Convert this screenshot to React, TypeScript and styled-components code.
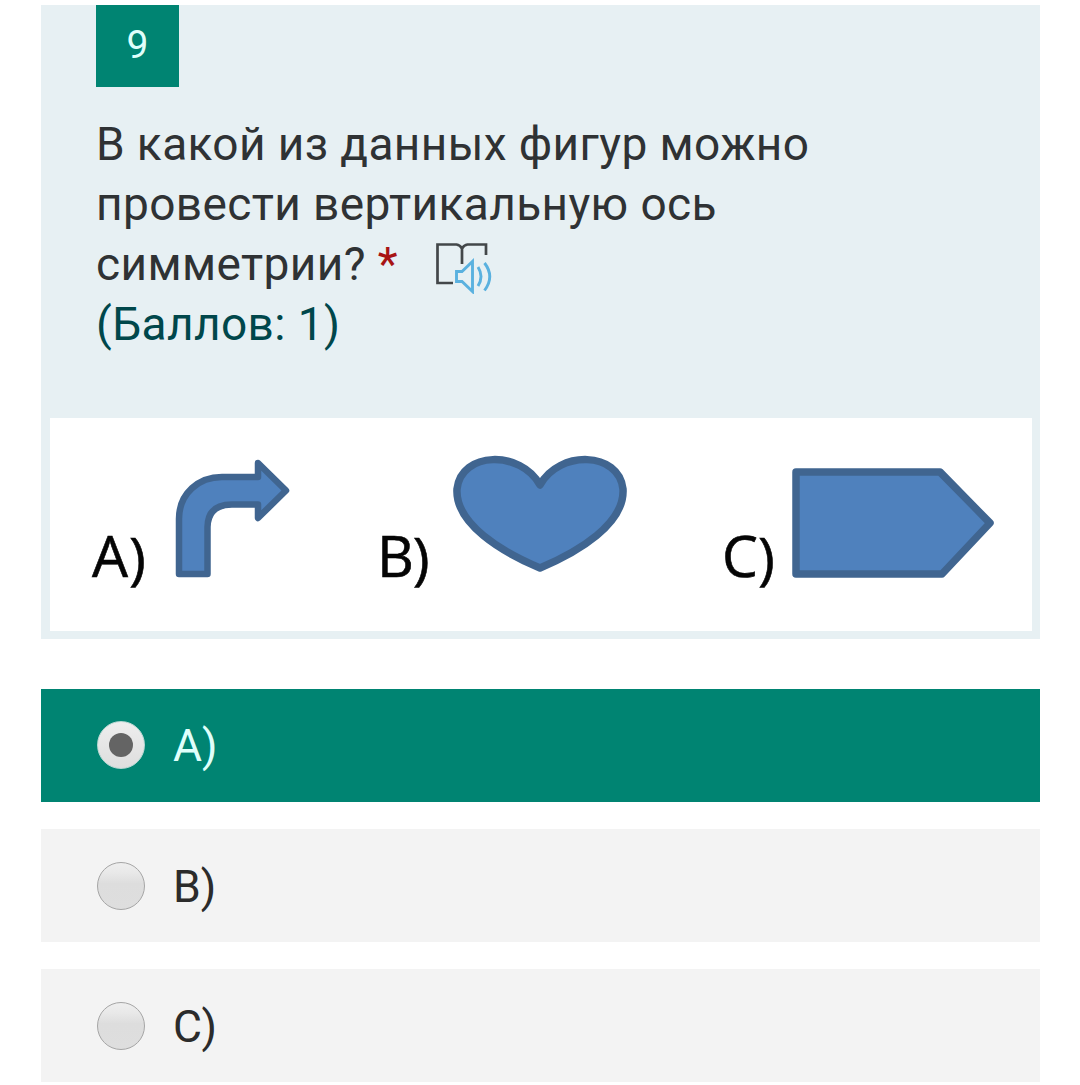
import React, { useState } from "react";
import styled, { createGlobalStyle } from "styled-components";

const GlobalStyle = createGlobalStyle`
  *, *::before, *::after { box-sizing: border-box; }
  body {
    margin: 0;
    background: #fff;
    font-family: Roboto, "Liberation Sans", sans-serif;
    overflow: hidden;
  }
`;

const Page = styled.main`
  display: flex;
  flex-direction: column;
  height: 1085px;
  padding: 5px 40px 0 41px;
`;

const QuestionCard = styled.section`
  display: flex;
  flex-direction: column;
  flex: none;
  height: 634px;
  margin-bottom: 50px;
  padding: 0 8px 8px 9px;
  background: #e7f0f3;
`;

const QuestionNumber = styled.div`
  display: flex;
  justify-content: center;
  width: 83px;
  height: 82px;
  margin-left: 46px;
  padding-top: 16px;
  background: #008472;
  color: #dffffb;
  font-size: 39px;
  line-height: 48px;
`;

const Question = styled.h1`
  flex: 1;
  margin: 27px 0 0 46px;
  color: #2f3234;
  font-size: 46px;
  font-weight: 400;
  line-height: 60px;
  letter-spacing: 0.4px;
`;

const Line = styled.span`
  display: flex;
  white-space: pre;
`;

const Required = styled.span`
  margin-left: 12px;
  color: #a81414;
`;

const Points = styled.span`
  display: block;
  color: #00474b;
`;

const ReaderIcon = styled.svg`
  width: 60px;
  height: 60px;
  margin-left: 35px;
`;

const Figure = styled.svg`
  display: block;
  width: 982px;
  height: 213px;
  background: #fff;
`;

const FigureLabel = styled.text`
  fill: #050505;
  stroke: #050505;
  stroke-width: 0.6px;
  font-family: "Open Sans", "Noto Sans", sans-serif;
  font-size: 57px;
`;

const Options = styled.div`
  display: flex;
  flex-direction: column;
  gap: 27px;
`;

const Option = styled.label<{ $checked: boolean }>`
  display: flex;
  align-items: center;
  flex: none;
  gap: 28px;
  height: 113px;
  padding: 0 0 ${(p) => (p.$checked ? 1 : 0)}px 56px;
  background: ${(p) => (p.$checked ? "#008472" : "#f3f3f3")};
  color: ${(p) => (p.$checked ? "#dffffb" : "#2b2b2b")};
  font-size: 44.5px;
  line-height: 60px;
`;

const Radio = styled.input`
  display: grid;
  place-items: center;
  appearance: none;
  width: 48px;
  height: 48px;
  margin: 0;
  border: 1px solid #a5a5a5;
  border-radius: 50%;
  background: linear-gradient(#eeeeee 0%, #e9e9e9 20%, #dddddd 45%, #dedede 100%);

  &:checked {
    border-color: #b9d8d3;
    background: linear-gradient(#eeeeee, #dedede);
  }

  &:checked::before {
    content: "";
    width: 24px;
    height: 24px;
    border-radius: 50%;
    background: #646464;
  }
`;

const OptionText = styled.span`
  padding-top: 2px;
`;

const answers = ["A)", "B)", "C)"];

export default function App() {
  const [selected, setSelected] = useState("A)");
  return (
    <>
      <GlobalStyle />
      <Page>
        <QuestionCard>
          <QuestionNumber>9</QuestionNumber>
          <Question>
            <Line>В какой из данных фигур можно</Line>
            <Line>провести вертикальную ось</Line>
            <Line>
              симметрии?<Required>*</Required>
              <ReaderIcon viewBox="434 234 60 60" fill="none" aria-label="Reader">
                <path
                  d="M454 283H438.500V244.500H457.500Q461 245 463 248.500Q465 245 468.500 244.500H487V255M463 248V264"
                  stroke="#434749"
                  strokeWidth="2.700"
                />
                <g stroke="#5ab1df" strokeWidth="2.900">
                  <path d="M457.500 271.500H463L473.500 261.500V291.500L463 281.500H457.500Z" />
                  <path d="M479 267Q485 276.500 479 286M485.500 263Q496 276.500 485.500 290.500" />
                </g>
              </ReaderIcon>
            </Line>
            <Points>(Баллов: 1)</Points>
          </Question>
          <Figure viewBox="50 418 982 213">
            <FigureLabel x="92" y="577">A<tspan dx="1" dy="2">)</tspan></FigureLabel>
            <FigureLabel x="377" y="577">B<tspan dx="-1" dy="2">)</tspan></FigureLabel>
            <FigureLabel x="722" y="577">C<tspan dy="2">)</tspan></FigureLabel>
            <g fill="#4f81bd" stroke="#406590" strokeWidth="6.500" strokeLinejoin="round">
              <path d="M179 574V519C179 493 199 477 222 477H258V463L286 490.500L258 518V504.500H232Q208 504.500 207.500 527V574Z" />
              <path d="M540 485C521 450 461 451 457 489C455 524 502 552 540 568C578 552 625 524 623 489C619 451 559 450 540 485Z" strokeWidth="7.500" />
              <path d="M796 472H940L990 523L942 574H796Z" strokeWidth="7.500" />
            </g>
          </Figure>
        </QuestionCard>
        <Options role="radiogroup">
          {answers.map((answer) => (
            <Option key={answer} $checked={selected === answer}>
              <Radio
                type="radio"
                name="answer"
                checked={selected === answer}
                onChange={() => setSelected(answer)}
              />
              <OptionText>{answer}</OptionText>
            </Option>
          ))}
        </Options>
      </Page>
    </>
  );
}
